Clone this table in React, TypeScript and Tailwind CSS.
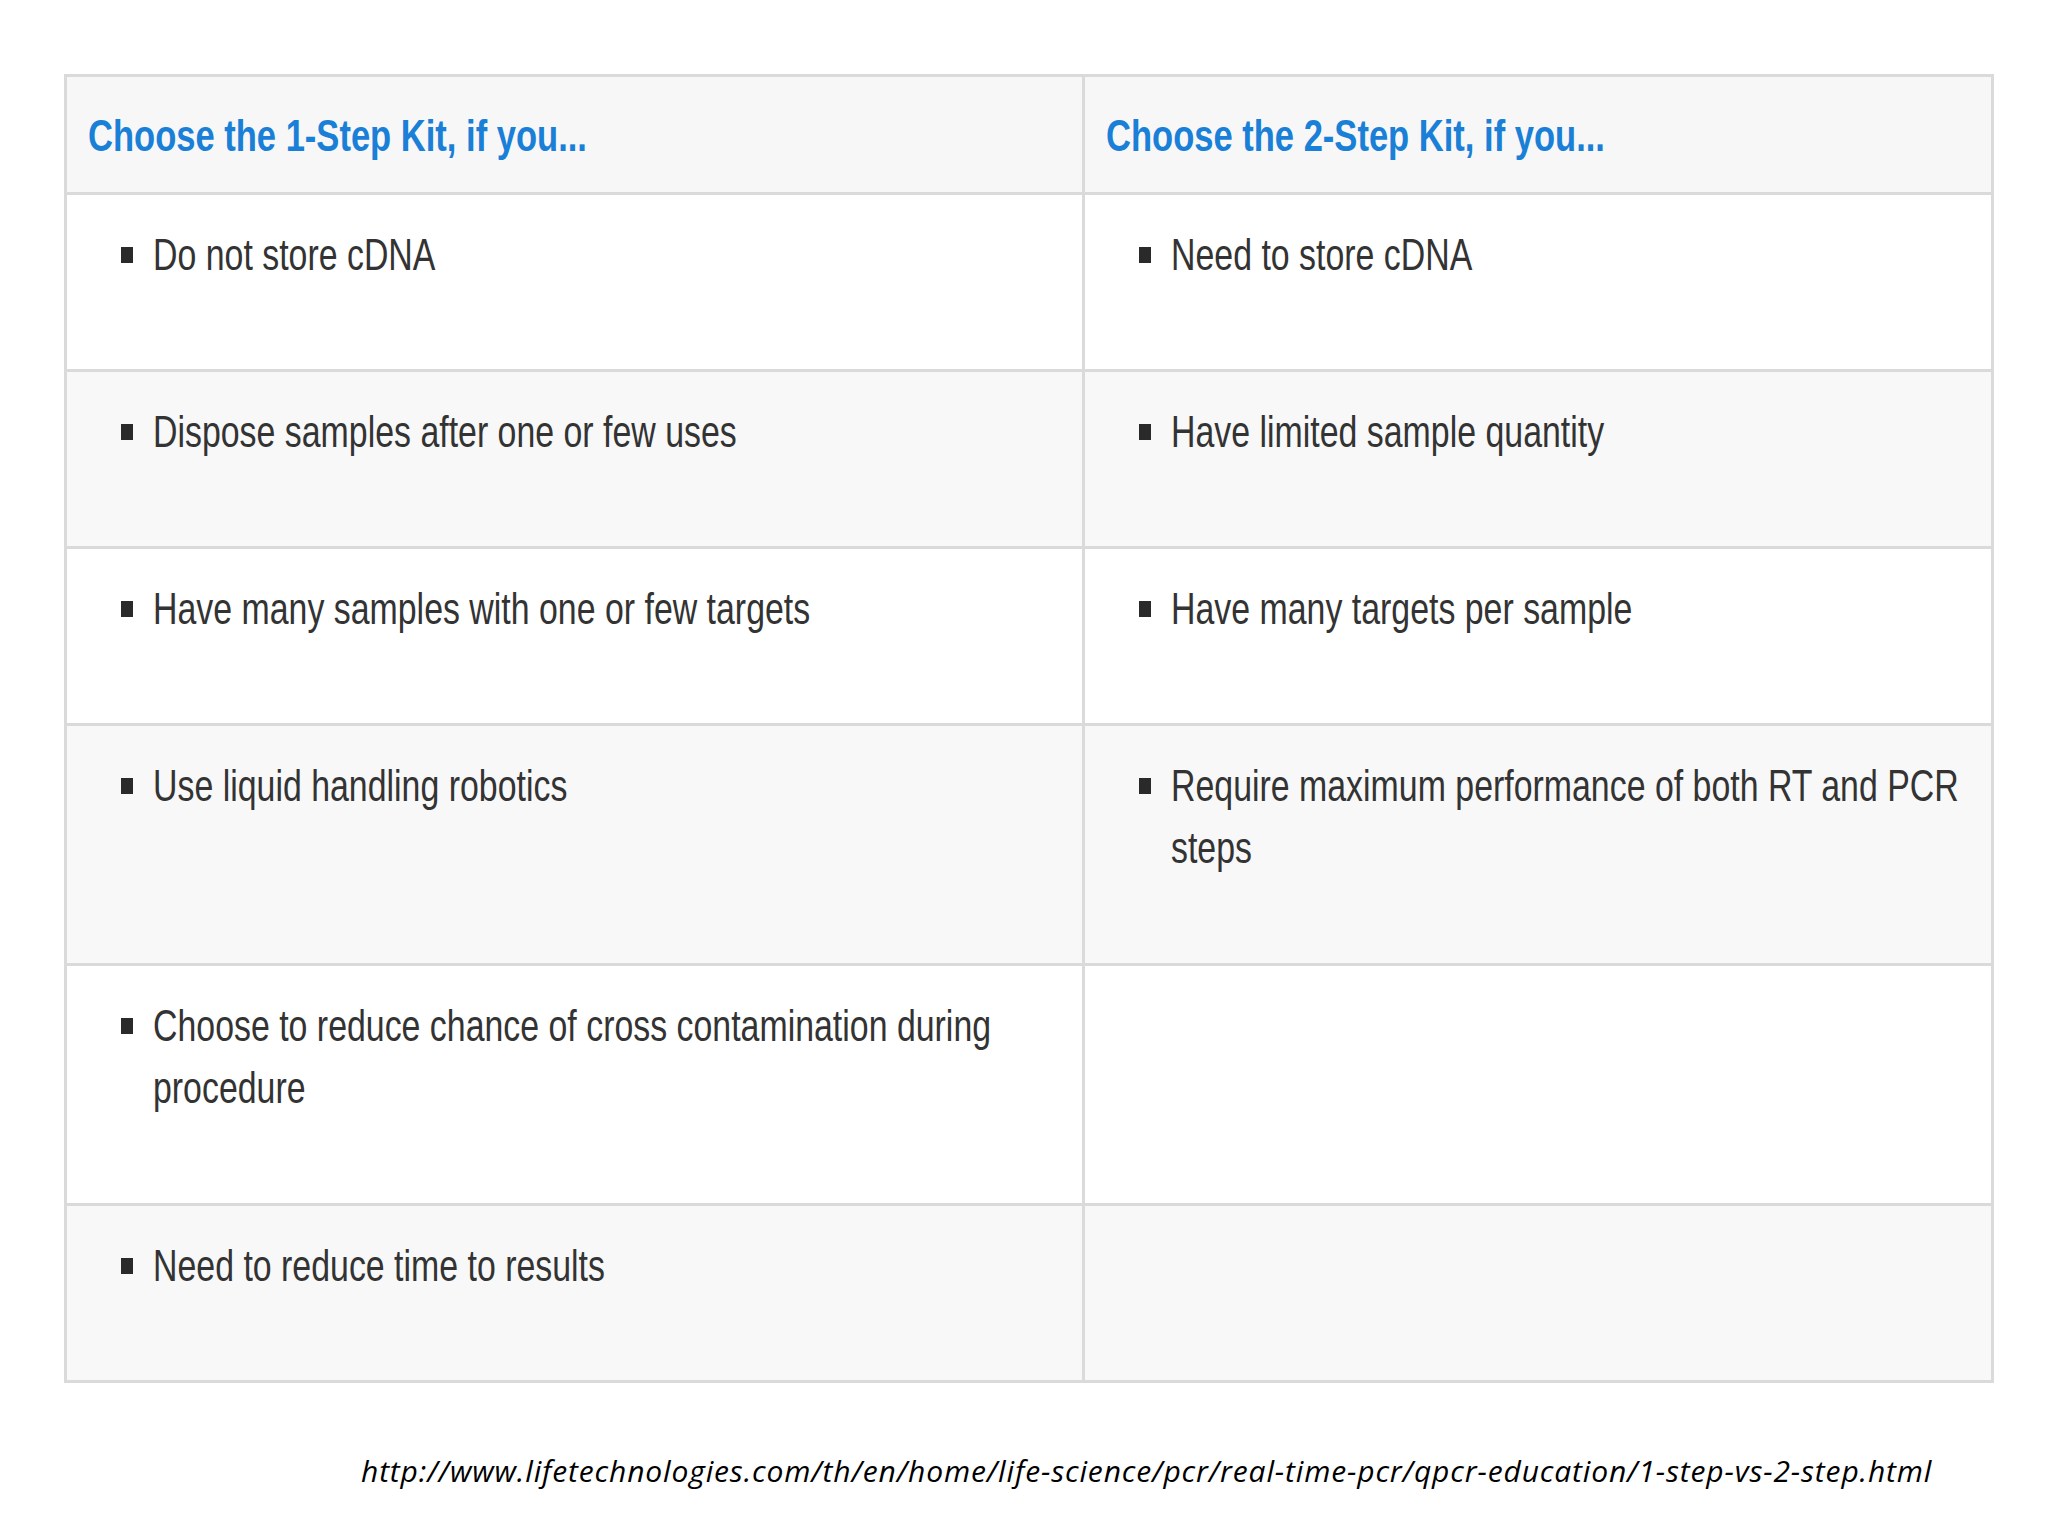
import React from "react";

type Row = { left: string[]; right: string[]; tall?: boolean; shade?: boolean };

const rows: Row[] = [
  { left: ["Do not store cDNA"], right: ["Need to store cDNA"] },
  { left: ["Dispose samples after one or few uses"], right: ["Have limited sample quantity"], shade: true },
  { left: ["Have many samples with one or few targets"], right: ["Have many targets per sample"] },
  { left: ["Use liquid handling robotics"], right: ["Require maximum performance of both RT and PCR", "steps"], tall: true, shade: true },
  { left: ["Choose to reduce chance of cross contamination during", "procedure"], right: [], tall: true },
  { left: ["Need to reduce time to results"], right: [], shade: true },
];

const font = { fontFamily: '"Liberation Sans", Arial, sans-serif' };

function Item({ lines }: { lines: string[] }) {
  if (lines.length === 0) return null;
  return (
    <div className="relative pl-[86px]">
      <span className="absolute left-[54px] top-[23px] h-[16px] w-[12px] bg-[#2a2a2a]" />
      {lines.map((l, i) => (
        <div key={i} className="h-[62px] leading-[62px] whitespace-nowrap">
          <span className="inline-block origin-left scale-x-[0.77] text-[44px] text-[#333333]">{l}</span>
        </div>
      ))}
    </div>
  );
}

export default function App() {
  return (
    <div className="min-h-[1536px] w-[2048px] overflow-hidden bg-white" style={font}>
      <div className="pl-[64px] pt-[74px]">
        <div className="w-[1930px] border-[3px] border-[#dadada]">
          <div className="flex border-b-[3px] border-[#dadada] bg-[#f7f7f7]">
            <div className="h-[115px] w-[1018px] shrink-0 overflow-hidden border-r-[3px] border-[#dadada] pl-[21px] pt-[28px]">
              <div className="h-[62px] leading-[62px] whitespace-nowrap">
                <span className="inline-block origin-left scale-x-[0.785] text-[44px] font-bold text-[#1a7fd6]">Choose the 1-Step Kit, if you...</span>
              </div>
            </div>
            <div className="h-[115px] min-w-0 flex-1 overflow-hidden pl-[21px] pt-[28px]">
              <div className="h-[62px] leading-[62px] whitespace-nowrap">
                <span className="inline-block origin-left scale-x-[0.785] text-[44px] font-bold text-[#1a7fd6]">Choose the 2-Step Kit, if you...</span>
              </div>
            </div>
          </div>
          {rows.map((r, i) => (
            <div
              key={i}
              className={`flex ${i < rows.length - 1 ? "border-b-[3px]" : ""} border-[#dadada] ${r.shade ? "bg-[#f8f8f9]" : "bg-white"}`}
            >
              <div className={`${r.tall ? "h-[237px]" : "h-[174px]"} w-[1018px] shrink-0 overflow-hidden border-r-[3px] border-[#dadada] pt-[29px]`}>
                <Item lines={r.left} />
              </div>
              <div className={`${r.tall ? "h-[237px]" : "h-[174px]"} min-w-0 flex-1 overflow-hidden pt-[29px]`}>
                <Item lines={r.right} />
              </div>
            </div>
          ))}
        </div>
        <div className="mt-[68px] pl-[297px] h-[40px] leading-[40px] whitespace-nowrap">
          <span
            className="inline-block text-[30px] italic tracking-[0.85px] text-black"
            style={{ fontFamily: '"Open Sans", "Liberation Sans", sans-serif' }}
          >
            http://www.lifetechnologies.com/th/en/home/life-science/pcr/real-time-pcr/qpcr-education/1-step-vs-2-step.html
          </span>
        </div>
      </div>
    </div>
  );
}
